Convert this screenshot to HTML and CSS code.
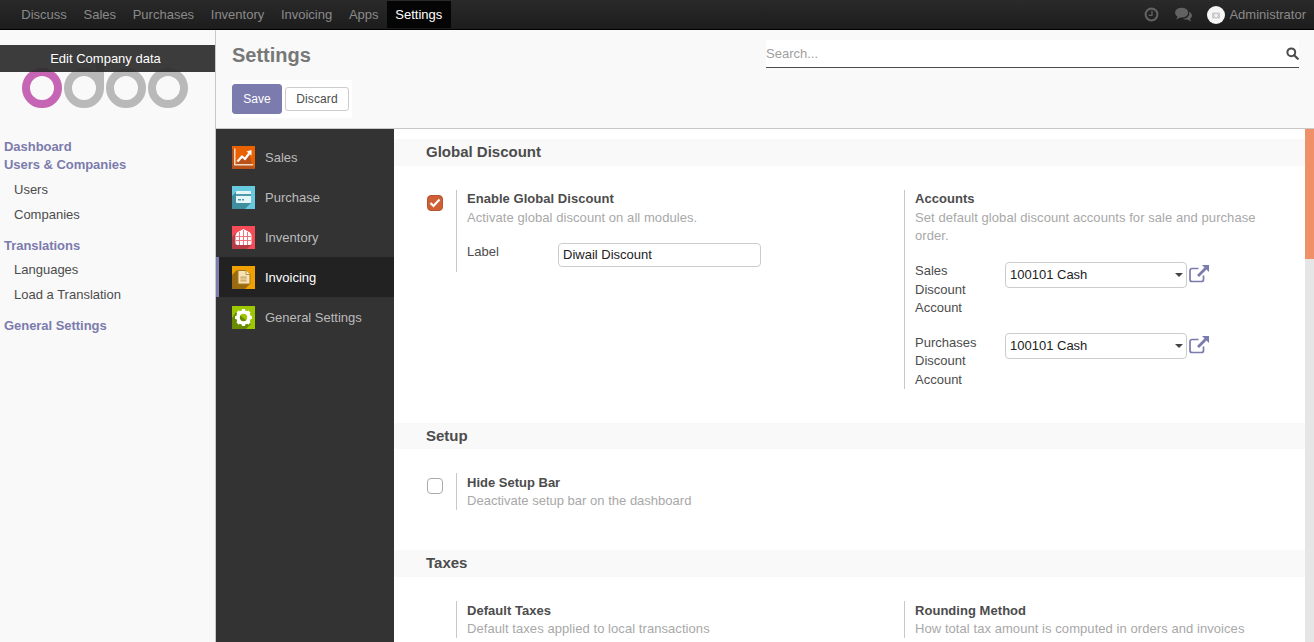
FILE: index.html
```html
<!DOCTYPE html>
<html lang="en">
<head>
<meta charset="utf-8">
<title>Settings</title>
<link rel="stylesheet" href="styles.css">
</head>
<body>
<nav class="topbar">
  <ul class="menu">
    <li>Discuss</li><li>Sales</li><li>Purchases</li><li>Inventory</li><li>Invoicing</li><li>Apps</li><li class="active">Settings</li>
  </ul>
  <div class="systray">
    <svg class="tray-icon" viewBox="0 0 16 16"><circle cx="8" cy="8" r="6.300" fill="none" stroke="#626262" stroke-width="2.200"/><path d="M8.500 4v5H5" fill="none" stroke="#626262" stroke-width="1.400"/></svg>
    <svg class="tray-icon chat" viewBox="0 0 18 16"><path d="M15 5c2 1 3 2.500 3 4 0 1.500-.8 2.600-2 3.400l1 3-3.800-2.200c-1.800.3-3.500 0-4.700-.8 4 .2 7.500-2.700 6.500-7.400z" fill="#626262"/><ellipse cx="7" cy="6" rx="7" ry="5.300" fill="#626262"/><path d="M3 9.500l-1.800 3.800 4.800-2.300z" fill="#626262"/></svg>
    <svg class="avatar" viewBox="0 0 18 18"><circle cx="9" cy="9" r="9" fill="#f6f6f6"/><rect x="5" y="6.500" width="8" height="6" rx="1" fill="#c9c9c9"/><circle cx="9" cy="9.500" r="1.800" fill="#f0f0f0"/></svg>
    <span class="user">Administrator</span>
  </div>
</nav>
<div class="app">
  <aside class="sidebar">
    <div class="logo-wrap">
      <svg class="logo" viewBox="0 0 170 46" width="170" height="46">
        <circle cx="20" cy="26" r="16" fill="none" stroke="#c765b5" stroke-width="8"/>
        <circle cx="62" cy="26" r="16" fill="none" stroke="#b9b9b9" stroke-width="8"/>
        <rect x="74" y="0" width="8" height="26" fill="#b9b9b9"/>
        <circle cx="104" cy="26" r="16" fill="none" stroke="#b9b9b9" stroke-width="8"/>
        <circle cx="146" cy="26" r="16" fill="none" stroke="#b9b9b9" stroke-width="8"/>
      </svg>
      <div class="edit-company">Edit Company data</div>
    </div>
    <div class="side-group head top">Dashboard</div>
    <div class="side-group head">Users &amp; Companies</div>
    <ul class="side-list">
      <li>Users</li>
      <li>Companies</li>
    </ul>
    <div class="side-group head spaced">Translations</div>
    <ul class="side-list tight">
      <li>Languages</li>
      <li>Load a Translation</li>
    </ul>
    <div class="side-group head spaced">General Settings</div>
  </aside>
  <div class="workspace">
    <header class="control">
      <div class="control-top">
        <h1 class="title">Settings</h1>
        <div class="search">
          <span class="search-text">Search...</span>
          <svg class="search-icon" viewBox="0 0 13 13"><circle cx="5.300" cy="5.300" r="3.900" fill="none" stroke="#4c4c4c" stroke-width="2"/><path d="M8.200 8.200l3.600 3.600" stroke="#4c4c4c" stroke-width="2.200" stroke-linecap="round"/></svg>
        </div>
      </div>
      <div class="buttons">
        <button class="btn primary">Save</button>
        <button class="btn plain">Discard</button>
      </div>
    </header>
    <div class="settings">
      <div class="tabs">
        <div class="tab">
          <svg class="app-icon" viewBox="0 0 23 23"><rect width="23" height="23" fill="#ea6200"/><path d="M0 23V3h3v14l2 0 5-6 3 2 4-6 3 12 3 3v1z" fill="#b8521a"/><path d="M2 2.500h1.500V18H21v1.500H2z" fill="#f3d9c4"/><path d="M5.500 15.500l4.500-5 3 2.500 4.200-5.500" fill="none" stroke="#fff" stroke-width="2.200"/><path d="M14.500 5.500l5-1.500v5.500z" fill="#fff"/></svg>
          <span>Sales</span>
        </div>
        <div class="tab">
          <svg class="app-icon" viewBox="0 0 23 23"><rect width="23" height="23" fill="#67c9dd"/><path d="M0 23V10l4-4 15 11-6 6z" fill="#3f8ea0"/><rect x="4" y="5" width="15" height="12" rx="1" fill="#e8f5f8"/><rect x="4" y="8" width="15" height="2" fill="#4b9bad"/><rect x="6" y="13" width="3" height="1.500" fill="#4b9bad"/><rect x="10" y="13" width="2" height="1.500" fill="#4b9bad"/></svg>
          <span>Purchase</span>
        </div>
        <div class="tab">
          <svg class="app-icon" viewBox="0 0 23 23"><rect width="23" height="23" fill="#f64c57"/><path d="M0 23V11l4-4 15 12-4 4z" fill="#b73c45"/><path d="M11.500 3L18 6.500 19.500 9v9l-1.500 1H5l-1.500-1V9L5 6.500z" fill="#fff"/><path d="M7.500 6v13M11.500 4v15M15.500 6v13M4 10.500h15M4 14.500h15" stroke="#f0646e" stroke-width=".9"/></svg>
          <span>Inventory</span>
        </div>
        <div class="tab current">
          <svg class="app-icon" viewBox="0 0 23 23"><rect width="23" height="23" fill="#f0a000"/><path d="M0 23V9l5-5 13 14-5 5z" fill="#9a6a10"/><path d="M6 4.500h8l4 4V18H6z" fill="#f5e2b8" stroke="#a87a20" stroke-width="1"/><path d="M14 4.500v4h4" fill="#fff3d4" stroke="#a87a20" stroke-width=".8"/><path d="M8.500 10.500h6v5h-6z" fill="#c9a25a"/><path d="M8.500 12.200h6M8.500 13.800h6" stroke="#f5e2b8" stroke-width=".8"/></svg>
          <span>Invoicing</span>
        </div>
        <div class="tab">
          <svg class="app-icon" viewBox="0 0 23 23"><rect width="23" height="23" fill="#9dc800"/><path d="M0 23V12l4-6 15 12-5 5z" fill="#6a8a00"/><circle cx="11.500" cy="11.500" r="5.500" fill="none" stroke="#fff" stroke-width="3.600"/><path d="M11.500 3v3M11.500 17v3M3 11.500h3M17 11.500h3M5.500 5.500l2 2M15.500 15.500l2 2M17.500 5.500l-2 2M7.500 15.500l-2 2" stroke="#fff" stroke-width="3.200"/></svg>
          <span>General Settings</span>
        </div>
      </div>
      <main class="content">
        <h2 class="band first">Global Discount</h2>
        <section class="row r-global">
          <div class="box">
            <div class="check-col"><span class="check on"><svg viewBox="0 0 12 10" width="12" height="10"><path d="M1.500 5l3 3 6-6.500" fill="none" stroke="#fff" stroke-width="2.200"/></svg></span></div>
            <div class="pane">
              <div class="name">Enable Global Discount</div>
              <div class="help">Activate global discount on all modules.</div>
              <div class="field field-label">
                <span class="field-name short">Label</span>
                <span class="input wide">Diwail Discount</span>
              </div>
            </div>
          </div>
          <div class="box">
            <div class="check-col"></div>
            <div class="pane">
              <div class="name">Accounts</div>
              <div class="help">Set default global discount accounts for sale and purchase order.</div>
              <div class="field acct">
                <span class="field-name">Sales<br>Discount<br>Account</span>
                <span class="input select">100101 Cash<i class="caret"></i></span>
                <svg class="ext" viewBox="0 0 20 18"><path d="M14.500 10.500v4a2 2 0 0 1-2 2H3a2 2 0 0 1-2-2v-9a2 2 0 0 1 2-2h6.500" fill="none" stroke="#7c7bad" stroke-width="1.700"/><path d="M13 0h7v7l-2.500-2.500L10 12l-2-2 7.500-7.500z" fill="#7c7bad"/></svg>
              </div>
              <div class="field acct">
                <span class="field-name">Purchases<br>Discount<br>Account</span>
                <span class="input select">100101 Cash<i class="caret"></i></span>
                <svg class="ext" viewBox="0 0 20 18"><path d="M14.500 10.500v4a2 2 0 0 1-2 2H3a2 2 0 0 1-2-2v-9a2 2 0 0 1 2-2h6.500" fill="none" stroke="#7c7bad" stroke-width="1.700"/><path d="M13 0h7v7l-2.500-2.500L10 12l-2-2 7.500-7.500z" fill="#7c7bad"/></svg>
              </div>
            </div>
          </div>
        </section>
        <h2 class="band thin">Setup</h2>
        <section class="row r-setup">
          <div class="box">
            <div class="check-col"><span class="check"></span></div>
            <div class="pane">
              <div class="name">Hide Setup Bar</div>
              <div class="help">Deactivate setup bar on the dashboard</div>
            </div>
          </div>
        </section>
        <h2 class="band">Taxes</h2>
        <section class="row r-taxes">
          <div class="box">
            <div class="check-col"></div>
            <div class="pane">
              <div class="name">Default Taxes</div>
              <div class="help">Default taxes applied to local transactions</div>
            </div>
          </div>
          <div class="box">
            <div class="check-col"></div>
            <div class="pane">
              <div class="name">Rounding Method</div>
              <div class="help">How total tax amount is computed in orders and invoices</div>
            </div>
          </div>
        </section>
      </main>
      <div class="scroll"><div class="thumb"></div></div>
    </div>
  </div>
</div>
</body>
</html>
```
FILE: styles.css
```css
* { box-sizing: border-box; }
html, body { margin: 0; height: 642px; overflow: hidden; }
body { font-family: "Liberation Sans", Arial, sans-serif; font-size: 13px; color: #4c4c4c; background: #fff; }
ul { list-style: none; margin: 0; padding: 0; }

.topbar { height: 30px; display: flex; justify-content: space-between; background: linear-gradient(#2a2a2a, #1c1c1c); border-bottom: 1px solid #000; }
.menu { display: flex; padding-left: 13px; height: 27px; margin-top: 1px; }
.menu li { padding: 0 8.330px; line-height: 27px; color: #8a8a8a; }
.menu li.active { background: #050505; color: #fff; padding: 0 8.500px; }
.systray { display: flex; align-items: center; padding-right: 8px; }
.tray-icon { width: 15px; height: 15px; margin-right: 16px; }
.tray-icon.chat { width: 17px; margin-right: 15px; }
.avatar { width: 18px; height: 18px; margin-right: 4px; }
.user { color: #8a8a8a; }

.app { display: flex; height: 612px; }
.sidebar { width: 216px; flex: none; background: #f9f9f9; border-right: 1px solid #c8c8c8; }
.logo-wrap { position: relative; height: 100px; padding: 32px 0 0 22px; }
.logo { display: block; }
.edit-company { position: absolute; left: 0; right: 0; top: 15px; height: 27px; line-height: 27px; text-align: center; padding-right: 4px; color: #fff; background: rgba(45, 45, 45, .93); }
.side-group { padding-left: 4px; height: 18px; line-height: 18px; }
.head { font-weight: bold; color: #7c7bad; letter-spacing: -.04px; }
.head.top { margin-top: 8px; }
.spaced { margin-top: 10px; }
.side-list { padding-top: 3px; }
.side-list.tight { padding-top: 2px; }
.side-list li { padding-left: 14px; height: 25px; line-height: 25px; }

.workspace { flex: 1; min-width: 0; display: flex; flex-direction: column; }
.control { height: 99px; flex: none; background: #f9f9f9; border-bottom: 1px solid #c8c8c8; padding: 0 15px 0 16px; }
.control-top { display: flex; justify-content: space-between; height: 54px; }
.title { margin: 13px 0 0; font-size: 20px; line-height: 24px; font-weight: bold; color: #777; }
.search { width: 533px; height: 28px; margin-top: 10px; background: #fff; border-bottom: 1px solid #4c4c4c; display: flex; justify-content: space-between; align-items: center; }
.search-text { color: #a0a0a0; }
.search-icon { width: 13px; height: 13px; }
.buttons { display: inline-flex; align-items: center; gap: 3px; height: 38px; margin-top: -4px; padding-right: 3px; background: #fff; }
.btn { font: inherit; font-size: 12px; height: 30px; border-radius: 3px; padding: 0; }
.btn.primary { width: 50px; background: #7c7bad; border: 1px solid #7c7bad; color: #fff; }
.btn.plain { width: 64px; height: 24px; background: #fff; border: 1px solid #ccc; color: #4c4c4c; letter-spacing: .1px; }

.settings { flex: 1; min-height: 0; display: flex; }
.tabs { width: 178px; flex: none; background: #333; padding-top: 8px; }
.tab { display: flex; align-items: center; height: 40px; padding-left: 16px; gap: 10px; color: #bbb; }
.tab.current { background: #222; color: #fff; border-left: 3px solid #7c7bad; padding-left: 13px; }
.app-icon { width: 23px; height: 23px; }

.content { flex: 1; min-width: 0; overflow: hidden; background: #fff; }
.band { margin: 0; height: 27px; line-height: 26px; padding-left: 32px; font-size: 15px; font-weight: bold; color: #4c4c4c; background: #f9f9f9; }
.band.first { margin-top: 10px; }
.band.thin { height: 26px; }
.row { display: flex; align-items: flex-start; padding-top: 24px; }
.r-global { height: 257px; }
.r-setup { height: 101px; }
.box { width: 448px; display: flex; flex: none; }
.check-col { width: 62px; flex: none; padding: 5px 0 0 33px; }
.check { display: block; width: 16px; height: 16px; border: 1px solid #aaa; border-radius: 4px; background: #fff; }
.check.on { background: #cf5f35; border-color: #b85530; display: flex; align-items: center; justify-content: center; }
.pane { border-left: 1px solid #c8c8c8; padding-left: 10px; flex: 1; min-width: 0; padding-right: 14px; }
.name { font-weight: bold; color: #4c4c4c; line-height: 18px; letter-spacing: .04px; }
.help { color: #a8a8a8; line-height: 18px; margin-top: 1px; letter-spacing: .065px; }
.r-setup .name, .r-taxes .name { margin-top: 1px; }
.r-setup .name { letter-spacing: 0; }
.r-setup .help, .r-taxes .help { margin-top: 0; }
.r-setup .help { letter-spacing: .01px; }
.field { display: flex; color: #4c4c4c; line-height: 18.500px; }
.field-label { margin-top: 16px; padding-bottom: 5px; }
.field-name { width: 90px; flex: none; }
.field-name.short { width: 91px; }
.input { display: block; height: 24px; line-height: 22px; border: 1px solid #ccc; border-radius: 4px; padding-left: 4px; color: #222; background: #fff; position: relative; }
.input.wide { width: 203px; }
.field.acct { margin-top: 17px; }
.field.acct + .field.acct { margin-top: 16px; }
.input.select { width: 182px; height: 26px; line-height: 24px; }
.acct + .acct .select { margin-top: -.5px; }
.caret { position: absolute; right: 3px; top: 10px; border-left: 4px solid transparent; border-right: 4px solid transparent; border-top: 4px solid #444; }
.ext { width: 20px; height: 18px; margin: 3px 0 0 2px; }
.acct + .acct .ext { margin-top: 2.500px; }

.scroll { width: 9px; flex: none; background: #e6e6e6; }
.thumb { height: 130px; background: #f09068; }
```
